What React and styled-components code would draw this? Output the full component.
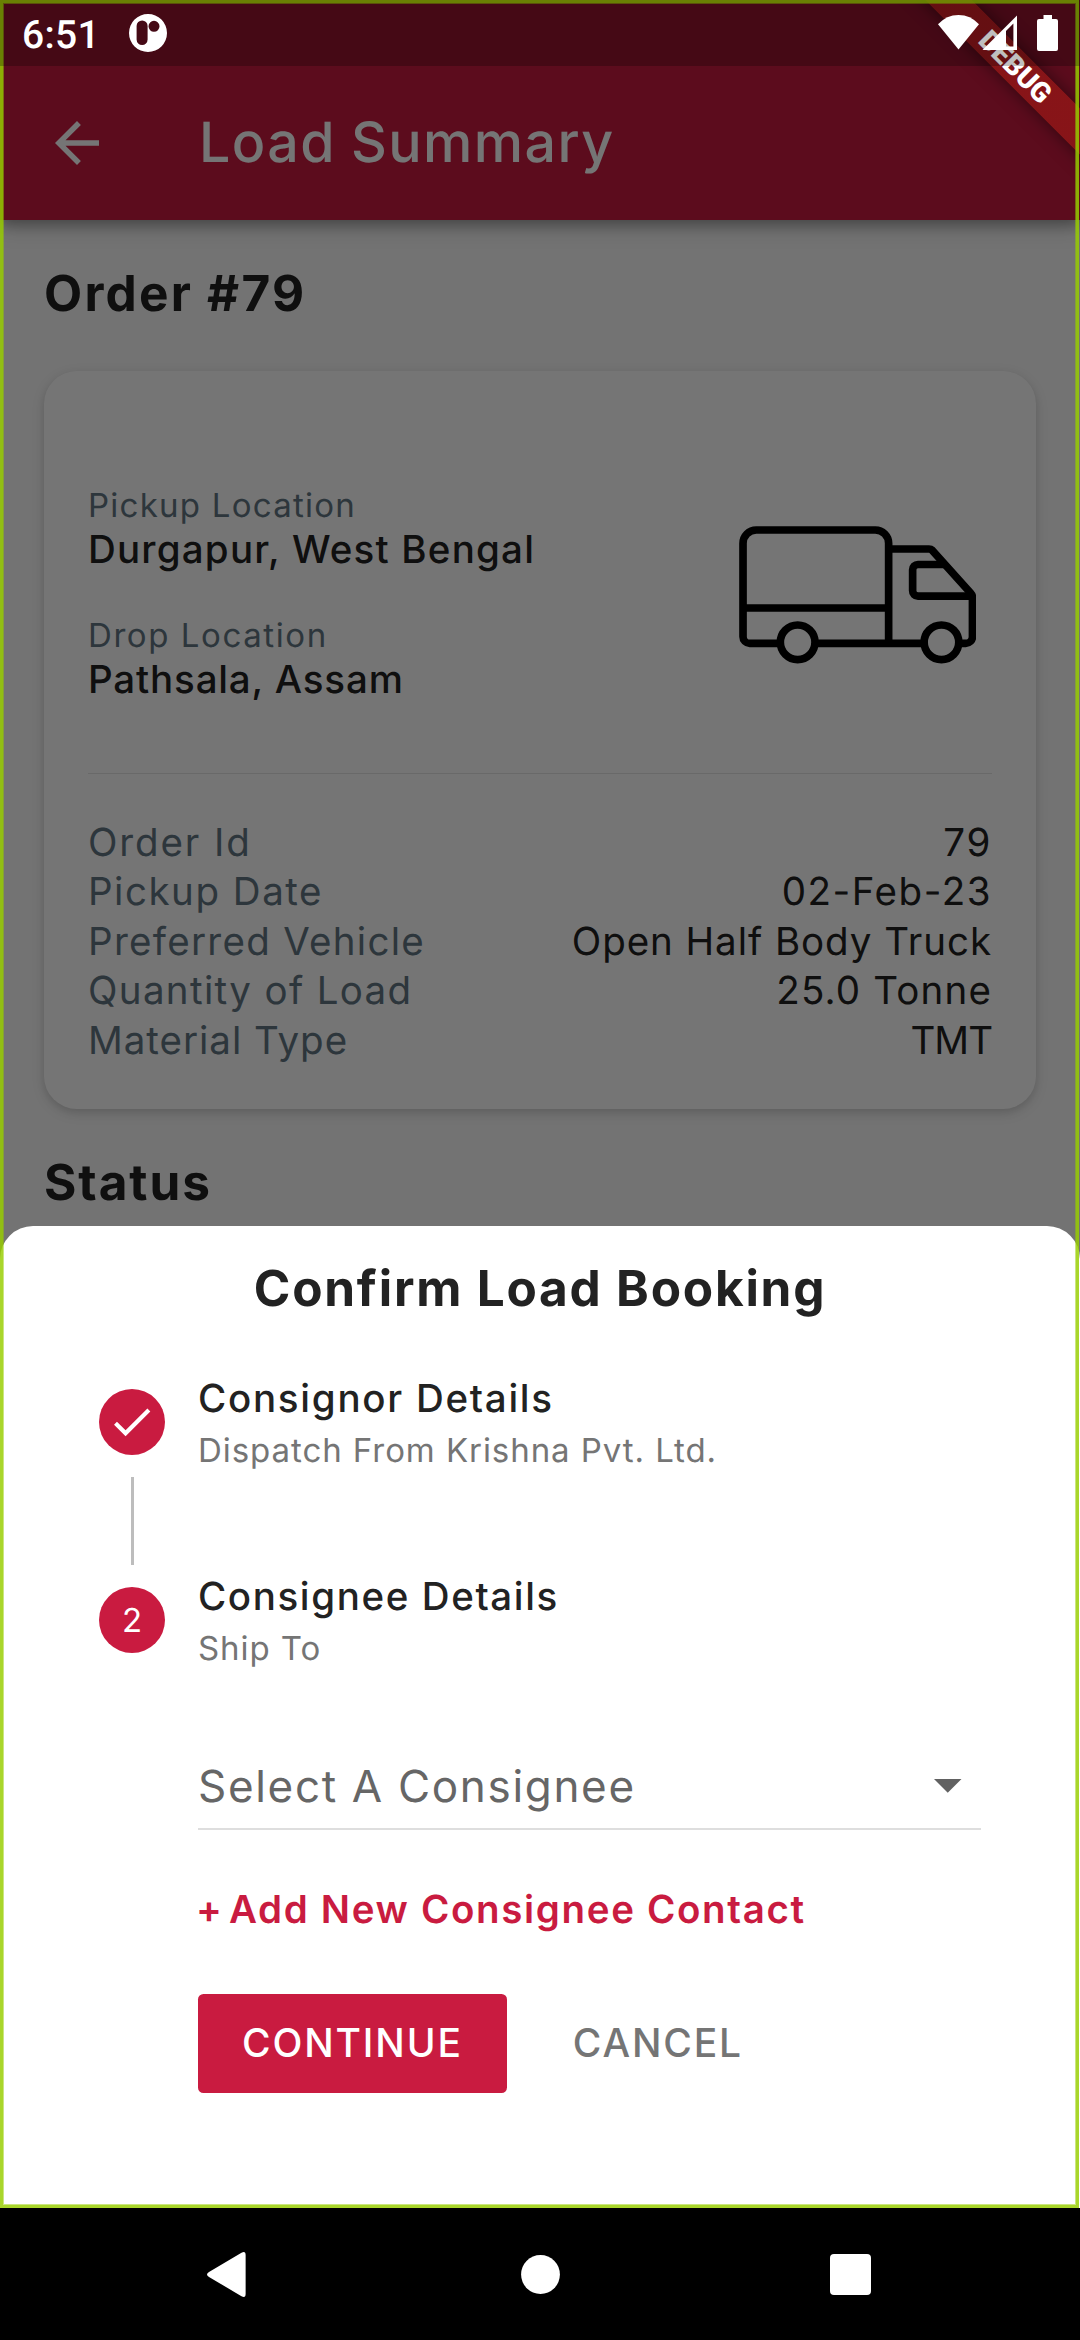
import React from "react";
import styled, { createGlobalStyle } from "styled-components";

const GlobalStyle = createGlobalStyle`
  * { box-sizing: border-box; }
  body { margin: 0; background: #000; text-rendering: geometricPrecision; }
  svg { display: block; flex: none; }
`;

const Screen = styled.div`
  position: relative;
  width: 1080px;
  height: 2340px;
  overflow: hidden;
  display: flex;
  flex-direction: column;
  background: #000;
  font-family: Inter, "Open Sans", sans-serif;
`;

const AppArea = styled.div`
  position: relative;
  height: 2208px;
  overflow: hidden;
  background: #fafafa;
`;

const Page = styled.div`
  display: flex;
  flex-direction: column;
`;

const AppBar = styled.header`
  height: 220px;
  padding: 66px 44px 0;
  display: flex;
  align-items: center;
  gap: 89px;
  background: #c91b40;
  color: #fff;
  box-shadow: 0 5px 11px rgba(0, 0, 0, 0.2), 0 6px 20px rgba(0, 0, 0, 0.26);
`;

const AppTitle = styled.h1`
  margin: 0;
  padding-bottom: 1px;
  font-size: 55.5px;
  line-height: 66px;
  font-weight: 500;
  letter-spacing: 1.4px;
  word-spacing: -1px;
`;

const Body = styled.main`
  padding: 43px 44px 0;
  display: flex;
  flex-direction: column;
  color: #222;
`;

const Heading = styled.h2`
  margin: 0;
  font-size: 49.5px;
  line-height: 60px;
  font-weight: 700;
  letter-spacing: ${(p) => p.$tracking}px;
  text-align: ${(p) => (p.$center ? "center" : "left")};
`;

const Card = styled.section`
  margin: 48px 0 43px;
  padding: 114px 44px 42.5px;
  border-radius: 33px;
  background: #fff;
  box-shadow: 0 3px 8px rgba(0, 0, 0, 0.1), 0 4px 14px rgba(0, 0, 0, 0.1);
`;

const Route = styled.div`
  display: flex;
  align-items: center;
  justify-content: space-between;
  padding-right: 16px;
`;

const Stops = styled.div`
  display: flex;
  flex-direction: column;
  gap: 40px;
`;

const StopLabel = styled.div`
  font-size: 33px;
  line-height: 40px;
  letter-spacing: ${(p) => p.$tracking}px;
  color: #637683;
`;

const StopPlace = styled.div`
  padding-top: 1px;
  font-size: 38.5px;
  line-height: 49px;
  font-weight: 500;
  letter-spacing: ${(p) => p.$tracking}px;
`;

const Divider = styled.hr`
  width: 100%;
  height: 1px;
  margin: 68px 0 44.5px;
  border: 0;
  background: #e4e4e4;
`;

const DetailRow = styled.div`
  display: flex;
  justify-content: space-between;
  font-size: 38.5px;
  line-height: 49.5px;
`;

const DetailLabel = styled.span`
  color: #637683;
  letter-spacing: ${(p) => p.$tracking}px;
`;

const DetailValue = styled.span`
  letter-spacing: ${(p) => p.$tracking}px;
`;

const Scrim = styled.div`
  position: absolute;
  inset: 0;
  background: rgba(0, 0, 0, 0.54);
`;

const Sheet = styled.section`
  position: absolute;
  left: 0;
  right: 0;
  bottom: 0;
  height: 982px;
  padding: 32px 99px 0;
  border-radius: 33px 33px 0 0;
  background: #fff;
  color: #222;
`;

const Stepper = styled.div`
  margin-top: 56px;
  display: flex;
  flex-direction: column;
`;

const StepRow = styled.div`
  display: flex;
  align-items: center;
  gap: 33px;
`;

const StepBadge = styled.div`
  width: 66px;
  height: 66px;
  border-radius: 50%;
  display: flex;
  align-items: center;
  justify-content: center;
  background: #c91b40;
  color: #fff;
  font-size: 33px;
  line-height: 40px;
`;

const StepText = styled.div`
  display: flex;
  flex-direction: column;
  gap: 7px;
`;

const StepTitle = styled.div`
  padding-top: 1px;
  font-size: 38.5px;
  line-height: 48px;
  font-weight: 500;
  letter-spacing: ${(p) => p.$tracking}px;
`;

const StepSub = styled.div`
  font-size: 33px;
  line-height: 40px;
  letter-spacing: 0.94px;
  color: #757575;
`;

const Connector = styled.div`
  width: 3px;
  height: 88px;
  margin: 7px 0 7px 31.5px;
  background: #bdbdbd;
`;

const StepContent = styled.div`
  margin-left: 99px;
`;

const Select = styled.div`
  margin-top: 90px;
  padding: 0 19.5px 14px 0;
  display: flex;
  align-items: center;
  justify-content: space-between;
  border-bottom: 2px solid #dedede;
  font-size: 44px;
  line-height: 56px;
  letter-spacing: 1.68px;
  color: #666;
`;

const AddLink = styled.div`
  margin: 55px 0 59px;
  display: flex;
  font-size: 38.5px;
  line-height: 50px;
  font-weight: 600;
  letter-spacing: 1.66px;
  color: #c91b40;
`;

const Plus = styled.span`
  width: 33px;
  margin-left: -2px;
`;

const Actions = styled.div`
  display: flex;
  gap: 22px;
`;

const Button = styled.button`
  height: 99px;
  min-width: ${(p) => (p.$primary ? "308px" : "0")};
  padding: 0 44px 2px;
  border: 0;
  border-radius: 5.5px;
  background: ${(p) => (p.$primary ? "#c91b40" : "transparent")};
  color: ${(p) => (p.$primary ? "#fff" : "#757575")};
  font-family: inherit;
  font-size: 39px;
  font-weight: 500;
  letter-spacing: 1.85px;
`;

const DebugBanner = styled.div`
  position: absolute;
  top: 49px;
  left: 864px;
  width: 300px;
  height: 33px;
  padding-left: 4px;
  display: flex;
  align-items: center;
  justify-content: center;
  transform: rotate(45deg);
  background: linear-gradient(rgba(183, 28, 28, 0.627), rgba(183, 28, 28, 0.627)), rgba(0, 0, 0, 0.4);
  box-shadow: 0 0 17px rgba(0, 0, 0, 0.5);
  color: #fff;
  font-family: Roboto, sans-serif;
  font-size: 28px;
  line-height: 33px;
  font-weight: 900;
`;

const Frame = styled.div`
  position: absolute;
  inset: 0 1px 0 0;
  border: 3px solid rgba(151, 206, 0, 0.83);
  box-shadow: inset 0 0 0 1px rgba(151, 206, 0, 0.5);
`;

const StatusBar = styled.div`
  position: absolute;
  top: 0;
  left: 0;
  right: 0;
  height: 66px;
  padding: 0 22px;
  display: flex;
  align-items: center;
  background: rgba(0, 0, 0, 0.25);
  color: #fff;
`;

const Clock = styled.span`
  width: 106.5px;
  padding-top: 3px;
  font-family: Roboto, sans-serif;
  font-size: 39px;
  line-height: 48px;
  font-weight: 500;
  letter-spacing: 0.3px;
`;

const StatusIcons = styled.div`
  margin-left: auto;
  display: flex;
  align-items: center;
`;

const NavBar = styled.nav`
  height: 132px;
  padding: 1px 209px 0 206.6px;
  display: flex;
  align-items: center;
  justify-content: space-between;
`;

const details = [
  { label: "Order Id", lt: 1.88, value: "79", vt: 1.69 },
  { label: "Pickup Date", lt: 1.52, value: "02-Feb-23", vt: 1.54 },
  { label: "Preferred Vehicle", lt: 1.29, value: "Open Half Body Truck", vt: 0.95 },
  { label: "Quantity of Load", lt: 1.35, value: "25.0 Tonne", vt: 1.17 },
  { label: "Material Type", lt: 0.98, value: "TMT", vt: -1 },
];

const BackArrow = () => (
  <svg width="66" height="66" viewBox="0 0 24 24" fill="currentColor">
    <path d="M20 11H7.83l5.59-5.59L12 4l-8 8 8 8 1.41-1.41L7.83 13H20v-2z" />
  </svg>
);

const Truck = () => (
  <svg width="237.3" height="137.3" viewBox="115 136 712 412" fill="none" stroke="#000" strokeWidth="23">
    <path d="M240 488H147a20 20 0 0 1-20-20V188a40 40 0 0 1 40-40H524a40 40 0 0 1 40 40V488" />
    <path d="M127 382H564M342 488H672M564 205H685q6 0 10 4L810 337q5.500 6 5.500 13V468a20 20 0 0 1-20 20H774" />
    <path d="M730 251.500H652a16 16 0 0 0-16 16V330a16 16 0 0 0 16 16.500H815" />
    <circle cx="291" cy="485" r="52" />
    <circle cx="722.500" cy="485" r="52" />
  </svg>
);

const Check = () => (
  <svg width="49.5" height="49.5" viewBox="0 0 24 24" fill="currentColor">
    <path d="M9 16.17L4.83 12l-1.42 1.41L9 19 21 7l-1.41-1.41z" />
  </svg>
);

const Caret = () => (
  <svg width="27.500" height="13.750" viewBox="0 0 10 5" fill="#616161">
    <path d="M0 0l5 5 5-5z" />
  </svg>
);

const AppBadge = () => (
  <svg width="38" height="38" viewBox="128.4 14.2 38 38">
    <path
      fill="#fff"
      fillRule="evenodd"
      d="M147.400 14.200a19 19 0 1 1 0 38a19 19 0 1 1 0-38zM141.500 20.700a5.500 5.500 0 0 0-5.500 5.500V39.800a5.500 5.500 0 0 0 11 0V26.200a5.500 5.500 0 0 0-5.500-5.500zM153.400 21a5.500 5.500 0 1 0 0 11a5.500 5.500 0 1 0 0-11z"
    />
  </svg>
);

const StatusGlyphs = () => (
  <svg width="120" height="36" viewBox="938 15 120 36" fill="#fff">
    <path d="M938 24.300Q946.500 15 958.500 15T979 24.300L958.500 49.500z" />
    <path fillRule="evenodd" d="M1017 15.500V50H982.500zM1013.400 23.500L1006 31V46.500H1013.400z" />
    <path d="M1043.500 15H1052V19H1056a2 2 0 0 1 2 2V49a2 2 0 0 1-2 2H1039a2 2 0 0 1-2-2V21a2 2 0 0 1 2-2H1043.500z" />
  </svg>
);

export default function App() {
  return (
    <>
      <GlobalStyle />
      <Screen>
        <AppArea>
          <Page>
            <AppBar>
              <BackArrow />
              <AppTitle>Load Summary</AppTitle>
            </AppBar>
            <Body>
              <Heading $tracking={2.24}>Order #79</Heading>
              <Card>
                <Route>
                  <Stops>
                    <div>
                      <StopLabel $tracking={1.25}>Pickup Location</StopLabel>
                      <StopPlace $tracking={1.21}>Durgapur, West Bengal</StopPlace>
                    </div>
                    <div>
                      <StopLabel $tracking={1.58}>Drop Location</StopLabel>
                      <StopPlace $tracking={0.84}>Pathsala, Assam</StopPlace>
                    </div>
                  </Stops>
                  <Truck />
                </Route>
                <Divider />
                {details.map((d) => (
                  <DetailRow key={d.label}>
                    <DetailLabel $tracking={d.lt}>{d.label}</DetailLabel>
                    <DetailValue $tracking={d.vt}>{d.value}</DetailValue>
                  </DetailRow>
                ))}
              </Card>
              <Heading $tracking={1.95}>Status</Heading>
            </Body>
          </Page>

          <Scrim />

          <Sheet>
            <Heading $tracking={1.78} $center>
              Confirm Load Booking
            </Heading>
            <Stepper>
              <StepRow>
                <StepBadge>
                  <Check />
                </StepBadge>
                <StepText>
                  <StepTitle $tracking={1.74}>Consignor Details</StepTitle>
                  <StepSub>Dispatch From Krishna Pvt. Ltd.</StepSub>
                </StepText>
              </StepRow>
              <Connector />
              <StepRow>
                <StepBadge>2</StepBadge>
                <StepText>
                  <StepTitle $tracking={1.62}>Consignee Details</StepTitle>
                  <StepSub>Ship To</StepSub>
                </StepText>
              </StepRow>
              <StepContent>
                <Select>
                  <span>Select A Consignee</span>
                  <Caret />
                </Select>
                <AddLink>
                  <Plus>+</Plus>
                  <span>Add New Consignee Contact</span>
                </AddLink>
                <Actions>
                  <Button $primary>CONTINUE</Button>
                  <Button>CANCEL</Button>
                </Actions>
              </StepContent>
            </Stepper>
          </Sheet>

          <DebugBanner>DEBUG</DebugBanner>
          <Frame />
          <StatusBar>
            <Clock>6:51</Clock>
            <AppBadge />
            <StatusIcons>
              <StatusGlyphs />
            </StatusIcons>
          </StatusBar>
        </AppArea>

        <NavBar>
          <svg width="45" height="45" viewBox="0 0 45 45" fill="#fff">
            <path d="M34.500 .8Q38.600-1.500 38.600 3V42Q38.600 46.500 34.500 44.200L2 25Q-2 22.500 2 20z" />
          </svg>
          <svg width="39" height="39" viewBox="0 0 39 39" fill="#fff">
            <circle cx="19.500" cy="19.500" r="19.400" />
          </svg>
          <svg width="41" height="41" viewBox="0 0 41 41" fill="#fff">
            <rect width="41" height="41" rx="4" />
          </svg>
        </NavBar>
      </Screen>
    </>
  );
}
